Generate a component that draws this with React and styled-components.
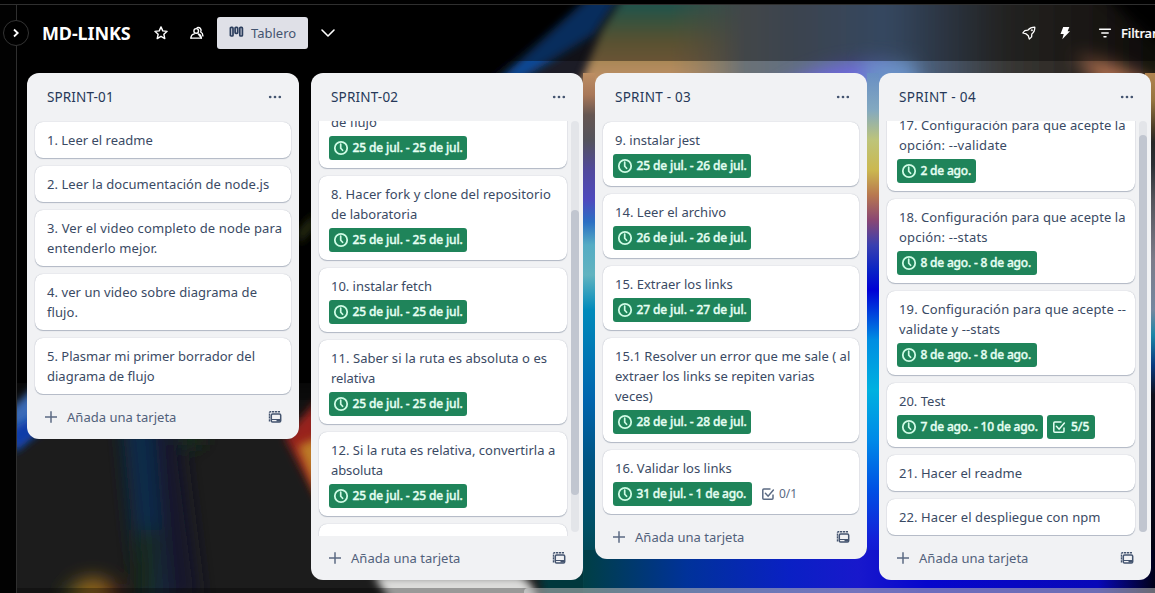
import React from "react";
import styled, { createGlobalStyle } from "styled-components";

const GlobalStyle = createGlobalStyle`
  * { box-sizing: border-box; }
  html, body { margin: 0; height: 100%; overflow: hidden; background: #000; }
  body { font-family: "Noto Sans", "Open Sans", sans-serif; font-size: 14px; color: #44546f; }
`;

const Page = styled.div`
  position: relative;
  display: flex;
  flex-direction: column;
  width: 1155px;
  height: 593px;
  overflow: hidden;
  background: #000;
`;

const TopBar = styled.div`
  height: 5px;
  flex: none;
  background: #000;
  border-bottom: 1px solid #2f2f2f;
`;

const Body = styled.div`
  display: flex;
  flex: 1;
  min-height: 0;
`;

const Rail = styled.aside`
  width: 17px;
  flex: none;
  background: #020202;
  border-right: 1px solid #2f2f2f;
`;

const RailToggle = styled.button`
  position: relative;
  z-index: 2;
  display: flex;
  align-items: center;
  justify-content: center;
  width: 26px;
  height: 26px;
  margin: 15px 0 0 3px;
  padding: 0;
  border: 1px solid #333;
  border-radius: 50%;
  background: #000;
`;

const Board = styled.main`
  position: relative;
  display: flex;
  flex-direction: column;
  flex: 1;
  min-width: 0;
  overflow: hidden;
`;

const Backdrop = styled.svg`
  position: absolute;
  left: 0;
  top: 0;
`;

const Header = styled.header`
  position: relative;
  display: flex;
  align-items: center;
  flex: none;
  height: 56px;
  padding-left: 25px;
  background: rgba(0, 0, 0, 0.38);
  color: #fff;
`;

const BoardTitle = styled.h1`
  width: 90px;
  margin: 0;
  font-size: 18px;
  font-weight: 700;
  line-height: 24px;
  letter-spacing: -0.1px;
  white-space: nowrap;
`;

const HeaderIcon = styled.span`
  display: flex;
  align-items: center;
  justify-content: center;
  flex: none;
  width: 20px;
  height: 32px;
  margin-left: ${(p) => p.$gap || 0}px;
`;

const ViewButton = styled.button`
  display: flex;
  align-items: center;
  flex: none;
  width: 91px;
  height: 32px;
  margin-left: 10px;
  padding: 0 0 0 12px;
  gap: 7px;
  border: 0;
  border-radius: 3px;
  background: #dfe0e7;
  color: #44546f;
  font: 400 13px/20px "Noto Sans", sans-serif;
`;

const HeaderRight = styled.div`
  display: flex;
  align-items: center;
  flex: none;
  width: 136px;
  margin-left: auto;
`;

const FilterLabel = styled.span`
  margin-left: 6px;
  font-size: 13px;
  font-weight: 500;
  letter-spacing: -0.1px;
  white-space: nowrap;
  -webkit-text-stroke: 0.2px currentColor;
`;

const Lists = styled.div`
  position: relative;
  display: flex;
  align-items: flex-start;
  gap: 12px;
  flex: 1;
  min-height: 0;
  padding: 12px 0 0 10px;
`;

const List = styled.section`
  display: flex;
  flex-direction: column;
  flex: none;
  width: 272px;
  border-radius: 12px;
  background: #f1f2f4;
  overflow: hidden;
`;

const ListHeader = styled.div`
  display: flex;
  align-items: center;
  justify-content: space-between;
  height: 48px;
  padding: 0 17px 0 20px;
`;

const ListTitle = styled.h2`
  margin: 0;
  color: #263858;
  font-size: 13.5px;
  font-weight: 400;
  line-height: 20px;
  letter-spacing: ${(p) => p.$tracking}px;
`;

const ListBody = styled.div`
  display: flex;
  gap: 4px;
  height: ${(p) => (p.$height ? `${p.$height}px` : "auto")};
  padding: 0 ${(p) => (p.$height ? 4 : 8)}px 0 8px;
  overflow: hidden;
`;

const Cards = styled.div`
  display: flex;
  flex-direction: column;
  gap: 8px;
  flex: 1;
  min-width: 0;
  margin-top: ${(p) => -p.$scrolled}px;
  padding: 1px 0;
`;

const Track = styled.div`
  width: 8px;
  height: 411px;
  border-radius: 4px;
  background: #e3e5e9;
  padding-top: ${(p) => p.$offset}px;
`;

const Thumb = styled.div`
  height: ${(p) => p.$length}px;
  border-radius: 4px;
  background: #c1c6d0;
`;

const Card = styled.article`
  flex: none;
  padding: 8px 0 8px 12px;
  border-radius: 8px;
  background: #fff;
  box-shadow: 0 1px 1px rgba(9, 30, 66, 0.25), 0 0 1px rgba(9, 30, 66, 0.31);
`;

const CardLine = styled.div`
  height: 20px;
  color: #3a4a64;
  font-size: 13px;
  line-height: 20px;
  letter-spacing: ${(p) => p.$tracking}px;
  white-space: nowrap;
`;

const Badges = styled.div`
  display: flex;
  gap: 4px;
  margin: 4px 0 0 -2px;
`;

const Badge = styled.span`
  display: flex;
  align-items: center;
  width: ${(p) => p.$width}px;
  height: 24px;
  padding-left: 4px;
  gap: ${(p) => p.$gap || 4}px;
  border-radius: 3px;
  background: ${(p) => (p.$plain ? "transparent" : "#1f845a")};
  color: ${(p) => (p.$plain ? "#5b6a83" : "#e6fff3")};
  font-size: 12px;
  font-weight: ${(p) => (p.$plain ? 400 : 500)};
  line-height: 20px;
  letter-spacing: ${(p) => p.$tracking || 0}px;
  white-space: nowrap;
  -webkit-text-stroke: ${(p) => (p.$plain ? 0 : 0.35)}px currentColor;
`;

const ListFooter = styled.div`
  display: flex;
  align-items: center;
  height: 44px;
  padding: 0 17px 0 17px;
  color: #52617b;
`;

const AddLabel = styled.span`
  margin: 0 auto 0 9px;
  font-size: 13px;
  line-height: 20px;
  letter-spacing: 0.02px;
`;

const BoardScroll = styled.div`
  position: absolute;
  left: 0;
  right: 0;
  bottom: 0;
  height: 5px;
  padding-left: 507px;
  background: rgba(0, 0, 0, 0.3);
`;

const BoardThumb = styled.div`
  height: 8px;
  border-radius: 4px 0 0 4px;
  background: rgba(255, 255, 255, 0.42);
`;

const ClockIcon = () => (
  <svg width="16" height="16" viewBox="0 0 16 16" fill="none" stroke="#cffbe5" strokeWidth="1.8">
    <circle cx="8" cy="8" r="6.2" />
    <path d="M7.7 4.2v4l1.9 2.1" strokeWidth="1.7" strokeLinecap="round" />
  </svg>
);

const CheckIcon = ({ color }) => (
  <svg width="16" height="16" viewBox="0 0 16 16" fill="none" stroke={color} strokeWidth="1.5">
    <path d="M10.5 3H3.8a1 1 0 0 0-1 1v8.2a1 1 0 0 0 1 1H12a1 1 0 0 0 1-1V8.6" />
    <path d="M5.4 7.3l2.7 2.9L13.4 4" strokeLinecap="round" />
  </svg>
);

const DotsIcon = () => (
  <svg width="14" height="4" viewBox="0 0 14 4" fill="#44546f">
    <circle cx="2.2" cy="2" r="1.35" />
    <circle cx="7" cy="2" r="1.35" />
    <circle cx="11.8" cy="2" r="1.35" />
  </svg>
);

const PlusIcon = () => (
  <svg width="14" height="14" viewBox="0 0 14 14" stroke="#5b6a83" strokeWidth="1.5">
    <path d="M7 1.2v11.6M1 7h12" />
  </svg>
);

const TemplateIcon = () => (
  <svg width="14" height="14" viewBox="0 0 14 14" fill="none" stroke="#44546f">
    <path d="M12 1.8H2.4a.9.9 0 0 0-.9.9v9" strokeWidth="1.4" strokeDasharray="2.2 .7" />
    <rect x="3.3" y="4" width="9.4" height="8" rx="1.3" strokeWidth="1.5" />
    <path d="M3.5 9.5h9" strokeWidth="1.2" />
    <path d="M8.5 9.5h3.6v2H8.500z" fill="#44546f" stroke="none" />
  </svg>
);

const StarIcon = () => (
  <svg width="16" height="16" viewBox="0 0 16 16" fill="none" stroke="#fff" strokeWidth="1.4" strokeLinejoin="round">
    <path d="M8 1.9l1.75 4 4.35.45-3.25 2.9.95 4.3L8 11.3l-3.8 2.25.95-4.3-3.25-2.9 4.35-.45z" />
  </svg>
);

const PeopleIcon = () => (
  <svg width="16" height="16" viewBox="0 0 16 16" fill="none" stroke="#fff" strokeWidth="1.4" strokeLinejoin="round" strokeLinecap="round">
    <circle cx="7.2" cy="5.9" r="2.3" />
    <path d="M1.9 13.1c.2-2.7 1.7-3.9 3.4-4.2M9.2 8.9c1.7.4 2.9 1.5 3.2 4.2z" />
    <path d="M1.9 13.1h10.5" />
    <path d="M8.2 2.7c2.6-.9 4.8 1.6 3.5 4.3 1.5.8 2.2 2.1 2.2 3.9" />
  </svg>
);

const BoardIcon = () => (
  <svg width="15" height="14" viewBox="0 0 15 14" fill="none" stroke="#2c3e5d" strokeWidth="1.7">
    <rect x="1.4" y="1.4" width="2.6" height="8.6" rx=".8" />
    <rect x="6.1" y="1.4" width="2.6" height="6" rx=".8" />
    <rect x="10.8" y="1.4" width="2.6" height="8.6" rx=".8" />
  </svg>
);

const ChevronDown = () => (
  <svg width="16" height="16" viewBox="0 0 16 16" fill="none" stroke="#fff" strokeWidth="1.6" strokeLinecap="round" strokeLinejoin="round">
    <path d="M2 5l6 6 6-6" />
  </svg>
);

const RocketIcon = () => (
  <svg width="16" height="16" viewBox="0 0 16 16" fill="none" stroke="#fff" strokeWidth="1.3" strokeLinejoin="round">
    <path d="M13.8 2.2C11.3 2.2 8.7 3 6.9 5.2L3.8 5.7 1.9 7.9 5.2 8.9 7.3 10.8 8.3 14.1 10.6 11.9 10.8 9C13.1 7.2 13.9 4.7 13.8 2.2z" />
    <circle cx="10.9" cy="5.3" r=".7" fill="#fff" strokeWidth=".6" />
  </svg>
);

const BoltIcon = () => (
  <svg width="16" height="16" viewBox="0 0 16 16" fill="#fff">
    <path d="M6.2 1.9h6.2L10.6 6.3H13L5.3 14.2 6.7 9.1H3.5z" />
  </svg>
);

const FilterIcon = () => (
  <svg width="14" height="14" viewBox="0 0 14 14" stroke="#fff" strokeWidth="1.5" strokeLinecap="round">
    <path d="M1.6 3.2h10.8M3.8 7h6.4M6 10.7h2" />
  </svg>
);

const Stops = ({ id, stops }) => (
  <linearGradient id={id} gradientUnits="userSpaceOnUse" x1="0" y1="0" x2="0" y2="593">
    {stops.map(([y, color]) => (
      <stop key={y} offset={y / 593} stopColor={color} />
    ))}
  </linearGradient>
);

const centerLight = [
  [70, "#c09265"], [95, "#a87758"], [115, "#655652"], [140, "#54535c"], [170, "#51499c"], [200, "#4e49be"],
  [222, "#2b6fc3"], [245, "#55acc4"], [275, "#62b3c0"], [310, "#008abb"], [400, "#0064ad"], [460, "#005584"],
  [530, "#004f63"], [593, "#043e42"],
];
const rightLight = [
  [70, "#668cc4"], [110, "#83a9c0"], [140, "#bdc47a"], [170, "#cbb850"], [195, "#b87850"], [220, "#8a4773"],
  [245, "#3a40b0"], [270, "#0a24c5"], [290, "#0000d6"], [310, "#0038dc"], [340, "#008ee2"], [390, "#00b1e0"],
  [440, "#008ae8"], [490, "#0050e4"], [540, "#1420d8"], [593, "#0a0ac0"],
];
const edgeLight = [
  [70, "#b48653"], [100, "#96753f"], [128, "#4a3c28"], [142, "#282828"], [165, "#2c3035"], [200, "#55555c"],
  [260, "#7c7c8a"], [310, "#7588a0"], [335, "#1c86a8"], [365, "#0a3a80"], [395, "#10101c"], [593, "#000010"],
];

const Wallpaper = () => (
  <Backdrop width="1138" height="588" viewBox="17 5 1138 588">
    <defs>
      <Stops id="center" stops={centerLight} />
      <Stops id="right" stops={rightLight} />
      <Stops id="edge" stops={edgeLight} />
      <linearGradient id="floor" x1="0" x2="1" y1="0" y2="0">
        <stop offset="0" stopColor="#003f45" />
        <stop offset=".18" stopColor="#00329a" />
        <stop offset=".36" stopColor="#0a20c4" />
        <stop offset=".48" stopColor="#1818cc" />
        <stop offset=".6" stopColor="#0606cc" />
        <stop offset=".9" stopColor="#0808b8" />
        <stop offset="1" stopColor="#000018" />
      </linearGradient>
      <linearGradient id="glow" gradientUnits="userSpaceOnUse" x1="560" x2="1155" y1="0" y2="0">
        <stop offset="0" stopColor="#9a7a55" />
        <stop offset=".17" stopColor="#8d7b60" />
        <stop offset=".27" stopColor="#707472" />
        <stop offset=".4" stopColor="#606d80" />
        <stop offset=".55" stopColor="#56749c" />
        <stop offset=".65" stopColor="#465468" />
        <stop offset=".75" stopColor="#383734" />
        <stop offset=".9" stopColor="#28231f" />
        <stop offset="1" stopColor="#15120e" />
      </linearGradient>
      <linearGradient id="prism" gradientUnits="userSpaceOnUse" x1="0" x2="0" y1="5" y2="78">
        <stop offset="0" stopColor="#35877b" />
        <stop offset=".22" stopColor="#5c8562" />
        <stop offset=".5" stopColor="#8f8450" />
        <stop offset=".75" stopColor="#a88755" />
        <stop offset="1" stopColor="#bd8f66" />
      </linearGradient>
      <linearGradient id="fade" gradientUnits="userSpaceOnUse" x1="670" x2="745" y1="0" y2="0">
        <stop offset="0" stopColor="#fff" />
        <stop offset="1" stopColor="#000" />
      </linearGradient>
      <mask id="prismMask" maskUnits="userSpaceOnUse" x="500" y="-40" width="300" height="180">
        <rect x="500" y="-40" width="300" height="180" fill="url(#fade)" />
      </mask>
      <filter id="b4" x="-50%" y="-50%" width="200%" height="200%"><feGaussianBlur stdDeviation="4" /></filter>
      <filter id="b8" x="-50%" y="-50%" width="200%" height="200%"><feGaussianBlur stdDeviation="9" /></filter>
      <filter id="b18" x="-50%" y="-50%" width="200%" height="200%"><feGaussianBlur stdDeviation="18" /></filter>
    </defs>
    <rect x="17" y="5" width="1138" height="588" fill="#000" />
    <rect x="-40" y="400" width="640" height="260" fill="#1d1d1e" filter="url(#b18)" />
    <g filter="url(#b8)">
      <path d="M122 420h32l14 190h-28z" fill="#0d2a4a" />
      <path d="M154 420h24l22 180h-32z" fill="#19182c" />
      <path d="M136 530h22v70h-22z" fill="#17291f" />
      <path d="M180 425h22v20h-22z" fill="#14301a" />
      <ellipse cx="93" cy="592" rx="20" ry="14" fill="#94691f" />
      <ellipse cx="72" cy="600" rx="8" ry="15" fill="#4e5720" />
      <ellipse cx="112" cy="600" rx="8" ry="16" fill="#6b2418" />
    </g>
    <path d="M10 410L42 380V424L14 450z" fill="#3a6cb8" filter="url(#b4)" />
    <path d="M10 430L42 412V430L14 452z" fill="#0a3aa8" filter="url(#b4)" />
    <path d="M285 437L318 400V500z" fill="#98201a" filter="url(#b4)" />
    <path d="M298 446L322 436V506z" fill="#bd7c25" filter="url(#b4)" />
    <path d="M298 232l16-18v12l-14 18z" fill="#2c3212" filter="url(#b4)" />
    <path d="M374 576H520q16 8 20 34H396z" fill="#dcdcda" filter="url(#b4)" />
    <path d="M538 570h60v40h-52z" fill="#06393c" filter="url(#b4)" />

    <path d="M600 100L650 -30H1085L1200 75V110z" fill="url(#glow)" filter="url(#b8)" />
    <path d="M480 95L625 -20L650 -10L590 95z" fill="#1d1c28" filter="url(#b8)" />
    <path d="M490 88L592 -6H622L594 34L516 82z" fill="#0c4a96" filter="url(#b4)" />
    <g mask="url(#prismMask)">
      <path d="M574 98L602 30L630 -14H800V98z" fill="url(#prism)" filter="url(#b4)" />
    </g>
    <path d="M750 110Q820 52 890 64L900 110z" fill="#7068dc" filter="url(#b8)" />
    <path d="M864 60h46l20 50h-66z" fill="#6a92c6" filter="url(#b8)" />
    <path d="M1074 54L1110 62L1165 90V110H1120z" fill="#b07050" filter="url(#b8)" />
    <path d="M1080 -30H1200V75z" fill="#000" filter="url(#b8)" />

    <rect x="583" y="73" width="12" height="520" fill="url(#center)" />
    <rect x="867" y="73" width="12" height="520" fill="url(#right)" />
    <rect x="1145" y="73" width="10" height="520" fill="url(#edge)" />
    <rect x="584" y="550" width="571" height="43" fill="url(#floor)" />
  </Backdrop>
);

/* Each line of a card is [text, letter spacing]. */
const card = (lines, date, width, extra) => ({ lines, date, width, extra });
const jul25 = "25 de jul. - 25 de jul.";

const LISTS = [
  {
    title: "SPRINT-01",
    tracking: 0.13,
    cards: [
      card([["1. Leer el readme", 0]]),
      card([["2. Leer la documentación de node.js", 0.06]]),
      card([["3. Ver el video completo de node para", 0.13], ["entenderlo mejor.", 0.13]]),
      card([["4. ver un video sobre diagrama de", 0.06], ["flujo.", 0.08]]),
      card([["5. Plasmar mi primer borrador del", 0], ["diagrama de flujo", 0]]),
    ],
  },
  {
    title: "SPRINT-02",
    tracking: 0.18,
    scroll: { by: 18, offset: 89, length: 285 },
    cards: [
      card([["de flujo", 0]], jul25, 138),
      card([["8. Hacer fork y clone del repositorio", 0.08], ["de laboratoria", 0]], jul25, 138),
      card([["10. instalar fetch", -0.03]], jul25, 138),
      card([["11. Saber si la ruta es absoluta o es", 0.06], ["relativa", -0.1]], jul25, 138),
      card([["12. Si la ruta es relativa, convertirla a", 0.02], ["absoluta", -0.1]], jul25, 138),
      card([["", 0]]),
    ],
  },
  {
    title: "SPRINT - 03",
    tracking: 0.27,
    cards: [
      card([["9. instalar jest", 0]], "25 de jul. - 26 de jul.", 138),
      card([["14. Leer el archivo", 0.03]], "26 de jul. - 26 de jul.", 138),
      card([["15. Extraer los links", 0]], "27 de jul. - 27 de jul.", 138),
      card(
        [["15.1 Resolver un error que me sale ( al", 0.04], ["extraer los links se repiten varias", 0], ["veces)", 0]],
        "28 de jul. - 28 de jul.",
        138
      ),
      card([["16. Validar los links", 0.03]], "31 de jul. - 1 de ago.", 139, { text: "0/1", plain: true }),
    ],
  },
  {
    title: "SPRINT - 04",
    tracking: 0.35,
    scroll: { by: 15, offset: 14, length: 397 },
    cards: [
      card([["17. Configuración para que acepte la", 0.08], ["opción: --validate", 0.2]], "2 de ago.", 79),
      card([["18. Configuración para que acepte la", 0.08], ["opción: --stats", 0.2]], "8 de ago. - 8 de ago.", 140),
      card([["19. Configuración para que acepte --", 0.16], ["validate y --stats", 0.13]], "8 de ago. - 8 de ago.", 140),
      card([["20. Test", 0]], "7 de ago. - 10 de ago.", 146, { text: "5/5" }),
      card([["21. Hacer el readme", 0.04]]),
      card([["22. Hacer el despliegue con npm", 0.08]]),
    ],
  },
];

const TaskCard = ({ data }) => (
  <Card>
    {data.lines.map(([text, tracking], i) => (
      <CardLine key={i} $tracking={tracking}>{text}</CardLine>
    ))}
    {data.date && (
      <Badges>
        <Badge $width={data.width} $gap={3.5} $tracking={data.date.includes("ago") ? -0.2 : -0.13}>
          <ClockIcon />
          {data.date}
        </Badge>
        {data.extra && (
          <Badge $width={48} $gap={data.extra.plain ? 3 : 4} $plain={data.extra.plain}>
            <CheckIcon color={data.extra.plain ? "#5b6a83" : "#e6fff3"} />
            {data.extra.text}
          </Badge>
        )}
      </Badges>
    )}
  </Card>
);

export default function App() {
  return (
    <Page>
      <GlobalStyle />
      <TopBar />
      <Body>
        <Rail>
          <RailToggle aria-label="expand">
            <svg width="8" height="10" viewBox="0 0 8 10" fill="none" stroke="#fff" strokeWidth="1.8">
              <path d="M2 1.5L5.7 5 2 8.5" />
            </svg>
          </RailToggle>
        </Rail>
        <Board>
          <Wallpaper />
          <Header>
            <BoardTitle>MD-LINKS</BoardTitle>
            <HeaderIcon $gap={19}><StarIcon /></HeaderIcon>
            <HeaderIcon $gap={16}><PeopleIcon /></HeaderIcon>
            <ViewButton><BoardIcon />Tablero</ViewButton>
            <HeaderIcon $gap={10}><ChevronDown /></HeaderIcon>
            <HeaderRight>
              <HeaderIcon><RocketIcon /></HeaderIcon>
              <HeaderIcon $gap={16}><BoltIcon /></HeaderIcon>
              <HeaderIcon $gap={20}><FilterIcon /></HeaderIcon>
              <FilterLabel>Filtrar</FilterLabel>
            </HeaderRight>
          </Header>
          <Lists>
            {LISTS.map((list) => (
              <List key={list.title}>
                <ListHeader>
                  <ListTitle $tracking={list.tracking}>{list.title}</ListTitle>
                  <DotsIcon />
                </ListHeader>
                <ListBody $height={list.scroll ? 415 : 0}>
                  <Cards $scrolled={list.scroll ? list.scroll.by : 0}>
                    {list.cards.map((c, i) => <TaskCard key={i} data={c} />)}
                  </Cards>
                  {list.scroll && (
                    <Track $offset={list.scroll.offset}>
                      <Thumb $length={list.scroll.length} />
                    </Track>
                  )}
                </ListBody>
                <ListFooter>
                  <PlusIcon />
                  <AddLabel>Añada una tarjeta</AddLabel>
                  <TemplateIcon />
                </ListFooter>
              </List>
            ))}
          </Lists>
          <BoardScroll><BoardThumb /></BoardScroll>
        </Board>
      </Body>
    </Page>
  );
}
